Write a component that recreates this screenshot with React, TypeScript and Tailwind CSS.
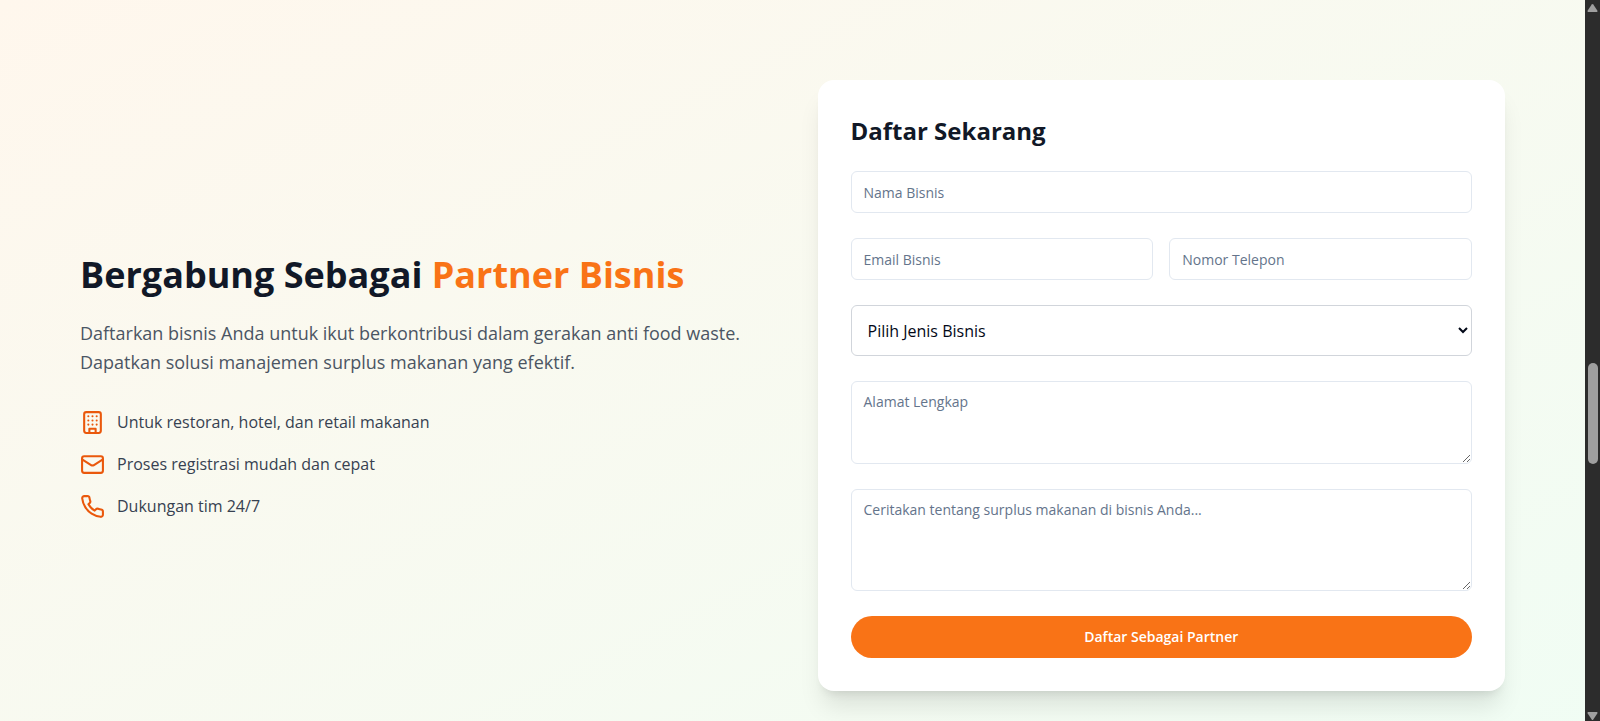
import { useState, type ComponentType, type SVGProps } from 'react'
import { Mail } from 'lucide-react'

type IconProps = SVGProps<SVGSVGElement>

interface Benefit {
  icon: ComponentType<IconProps>
  text: string
}

const STROKE = {
  viewBox: '0 0 24 24',
  fill: 'none',
  stroke: 'currentColor',
  strokeWidth: 2,
  strokeLinecap: 'round',
  strokeLinejoin: 'round',
} as const

function BuildingIcon(props: IconProps) {
  return (
    <svg {...STROKE} {...props}>
      <rect width="16" height="20" x="4" y="2" rx="2" ry="2" />
      <path d="M9 22v-4h6v4" />
      <path d="M8 6h.01M16 6h.01M12 6h.01M12 10h.01M12 14h.01M16 10h.01M16 14h.01M8 10h.01M8 14h.01" />
    </svg>
  )
}

function PhoneIcon(props: IconProps) {
  return (
    <svg {...STROKE} {...props}>
      <path d="M22 16.92v3a2 2 0 0 1-2.18 2 19.79 19.79 0 0 1-8.63-3.07 19.5 19.5 0 0 1-6-6 19.79 19.79 0 0 1-3.07-8.67A2 2 0 0 1 4.11 2h3a2 2 0 0 1 2 1.72 12.84 12.84 0 0 0 .7 2.81 2 2 0 0 1-.45 2.11L8.09 9.91a16 16 0 0 0 6 6l1.27-1.27a2 2 0 0 1 2.11-.45 12.84 12.84 0 0 0 2.81.7A2 2 0 0 1 22 16.92z" />
    </svg>
  )
}

const BENEFITS: Benefit[] = [
  { icon: BuildingIcon, text: 'Untuk restoran, hotel, dan retail makanan' },
  { icon: Mail, text: 'Proses registrasi mudah dan cepat' },
  { icon: PhoneIcon, text: 'Dukungan tim 24/7' },
]

const BUSINESS_TYPES = ['Restoran', 'Hotel', 'Retail Makanan', 'Katering']

const FIELD =
  'block w-full rounded-md border border-[#e2e8f0] bg-white px-3 text-sm text-[#0f172a] placeholder:text-[#64748b] focus:outline-none focus:ring-2 focus:ring-[#f97316]'

function PartnerIntro() {
  return (
    <div>
      <h2 className="mb-[22px] text-4xl leading-[44px] font-bold text-[#111827]">
        Bergabung Sebagai <span className="text-[#f97316]">Partner Bisnis</span>
      </h2>
      <p className="mb-[33px] text-lg leading-[29px] text-[#4b5563]">
        Daftarkan bisnis Anda untuk ikut berkontribusi dalam gerakan anti food waste. Dapatkan
        solusi manajemen surplus makanan yang efektif.
      </p>
      <ul className="space-y-[17px]">
        {BENEFITS.map(({ icon: Icon, text }) => (
          <li key={text} className="flex items-center gap-3">
            <Icon className="size-[25px] shrink-0 text-[#ea580c]" aria-hidden="true" />
            <span className="text-base text-[#374151]">{text}</span>
          </li>
        ))}
      </ul>
    </div>
  )
}

function PartnerForm() {
  const [businessType, setBusinessType] = useState('')

  return (
    <div className="rounded-2xl bg-white p-[33px] shadow-xl">
      <h3 className="mb-[22px] text-2xl leading-9 font-bold text-[#111827]">Daftar Sekarang</h3>
      <form className="space-y-[25px]" onSubmit={(event) => event.preventDefault()}>
        <input
          type="text"
          name="name"
          aria-label="Nama Bisnis"
          placeholder="Nama Bisnis"
          className={`${FIELD} h-[42px]`}
        />
        <div className="grid grid-cols-2 gap-4">
          <input
            type="email"
            name="email"
            aria-label="Email Bisnis"
            placeholder="Email Bisnis"
            className={`${FIELD} h-[42px]`}
          />
          <input
            type="tel"
            name="phone"
            aria-label="Nomor Telepon"
            placeholder="Nomor Telepon"
            className={`${FIELD} h-[42px]`}
          />
        </div>
        <select
          name="businessType"
          aria-label="Jenis Bisnis"
          value={businessType}
          onChange={(event) => setBusinessType(event.target.value)}
          className="block h-[51px] w-full rounded-md border border-[#d1d5db] bg-white px-3 text-base text-[#020817]"
        >
          <option value="">Pilih Jenis Bisnis</option>
          {BUSINESS_TYPES.map((type) => (
            <option key={type} value={type}>
              {type}
            </option>
          ))}
        </select>
        <textarea
          name="address"
          aria-label="Alamat Lengkap"
          placeholder="Alamat Lengkap"
          className={`${FIELD} h-[83px] py-[10px]`}
        />
        <textarea
          name="description"
          aria-label="Deskripsi surplus makanan"
          placeholder="Ceritakan tentang surplus makanan di bisnis Anda..."
          className={`${FIELD} h-[102px] py-[10px]`}
        />
        <button
          type="submit"
          className="block h-[42px] w-full rounded-full bg-[#f97316] text-sm font-semibold text-white hover:bg-[#ea580c]"
        >
          Daftar Sebagai Partner
        </button>
      </form>
    </div>
  )
}

function Scrollbar() {
  return (
    <div
      className="flex w-[15px] shrink-0 flex-col items-center justify-between bg-[#2c2c2c] text-[#9f9f9f]"
      aria-hidden="true"
    >
      <svg width="11" height="13" viewBox="0 0 11 13" fill="currentColor">
        <path d="M4.7 4.6a1 1 0 0 1 1.6 0l4 5.9c.5.8.1 1.5-.8 1.5h-8c-.9 0-1.3-.7-.8-1.5z" />
      </svg>
      <div className="flex w-full flex-1 flex-col items-center">
        <div className="flex-[350]" />
        <div className="w-[10px] flex-[101] rounded-full bg-[#9f9f9f]" />
        <div className="flex-[244]" />
      </div>
      <svg width="11" height="13" viewBox="0 0 11 13" fill="currentColor">
        <path d="M4.700 11.400a1 1 0 0 0 1.600 0l4-5.900c.5-.8.1-1.500-.8-1.500h-8c-.9 0-1.300.7-.8 1.500z" />
      </svg>
    </div>
  )
}

export default function App() {
  return (
    <div className="flex h-screen overflow-hidden font-['Open_Sans','Noto_Sans',sans-serif]">
      <main className="min-w-0 flex-1 overflow-hidden">
        <section className="bg-linear-to-br/srgb from-[#fff7ed] to-[#f0fdf4] px-20 py-20">
          <div className="grid grid-cols-2 items-center gap-[50px]">
            <PartnerIntro />
            <PartnerForm />
          </div>
        </section>
      </main>
      <Scrollbar />
    </div>
  )
}
